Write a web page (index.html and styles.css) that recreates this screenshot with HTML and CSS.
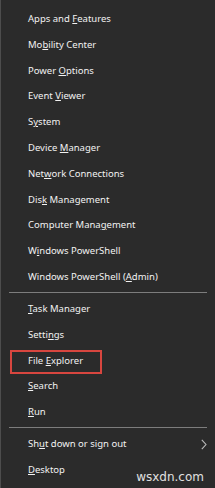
FILE: index.html
```html
<!DOCTYPE html>
<html lang="en">
<head>
    <meta charset="UTF-8">
    <title>Quick Link Menu</title>
    <link rel="stylesheet" href="styles.css">
</head>
<body>
    <div class="menu">
        <div class="item">Apps and <u>F</u>eatures</div>
        <div class="item">Mo<u>b</u>ility Center</div>
        <div class="item">Power <u>O</u>ptions</div>
        <div class="item">Event <u>V</u>iewer</div>
        <div class="item">S<u>y</u>stem</div>
        <div class="item">Device <u>M</u>anager</div>
        <div class="item">Net<u>w</u>ork Connections</div>
        <div class="item">Dis<u>k</u> Management</div>
        <div class="item">Computer Mana<u>g</u>ement</div>
        <div class="item">W<u>i</u>ndows PowerShell</div>
        <div class="item">Windows PowerShell (<u>A</u>dmin)</div>

        <div class="separator"></div>

        <div class="item"><u>T</u>ask Manager</div>
        <div class="item">Setti<u>n</u>gs</div>
        <div class="item">File <u>E</u>xplorer<span class="mark"></span></div>
        <div class="item"><u>S</u>earch</div>
        <div class="item"><u>R</u>un</div>

        <div class="separator"></div>

        <div class="item">Sh<u>u</u>t down or sign out<svg class="chevron" width="6" height="11" viewBox="0 0 6 11"><path d="M0.8 0.8 L5 5.5 L0.8 10.2" fill="none" stroke="#bdbdbd" stroke-width="1.1"/></svg></div>
        <div class="item"><u>D</u>esktop</div>

        <div class="watermark">wsxdn.com</div>
    </div>
</body>
</html>
```

FILE: styles.css
```css
/* Win+X menu */
body {
    margin: 0;
    padding: 0;
    background: #2b2b2b;
}

.menu {
    position: relative;
    height: 488px;
    box-sizing: border-box;
    padding-top: 6px;
    background: #2b2b2b;
    border-left: 1px solid #4d4d4d;
    font-family: "Noto Sans", "Open Sans", sans-serif;
    font-size: 9.5px;
    color: #f2f2f2;
}

.item {
    position: relative;
    height: 25.8px;
    line-height: 25.8px;
    padding-left: 27px;
    white-space: nowrap;
}

.item u {
    text-underline-offset: 1px;
}

.separator {
    height: 1px;
    margin: 2px 8px 3.3px 8px;
    background: #7d7d7d;
}

.mark {
    position: absolute;
    left: 9px;
    top: 2px;
    width: 88px;
    height: 20px;
    border: 2px solid #d8463f;
}

.chevron {
    position: absolute;
    right: 8px;
    top: 8px;
}

.watermark {
    position: absolute;
    right: 11px;
    bottom: 4px;
    font-family: "DejaVu Sans", sans-serif;
    font-size: 12px;
    color: #e0e0e0;
}
```
